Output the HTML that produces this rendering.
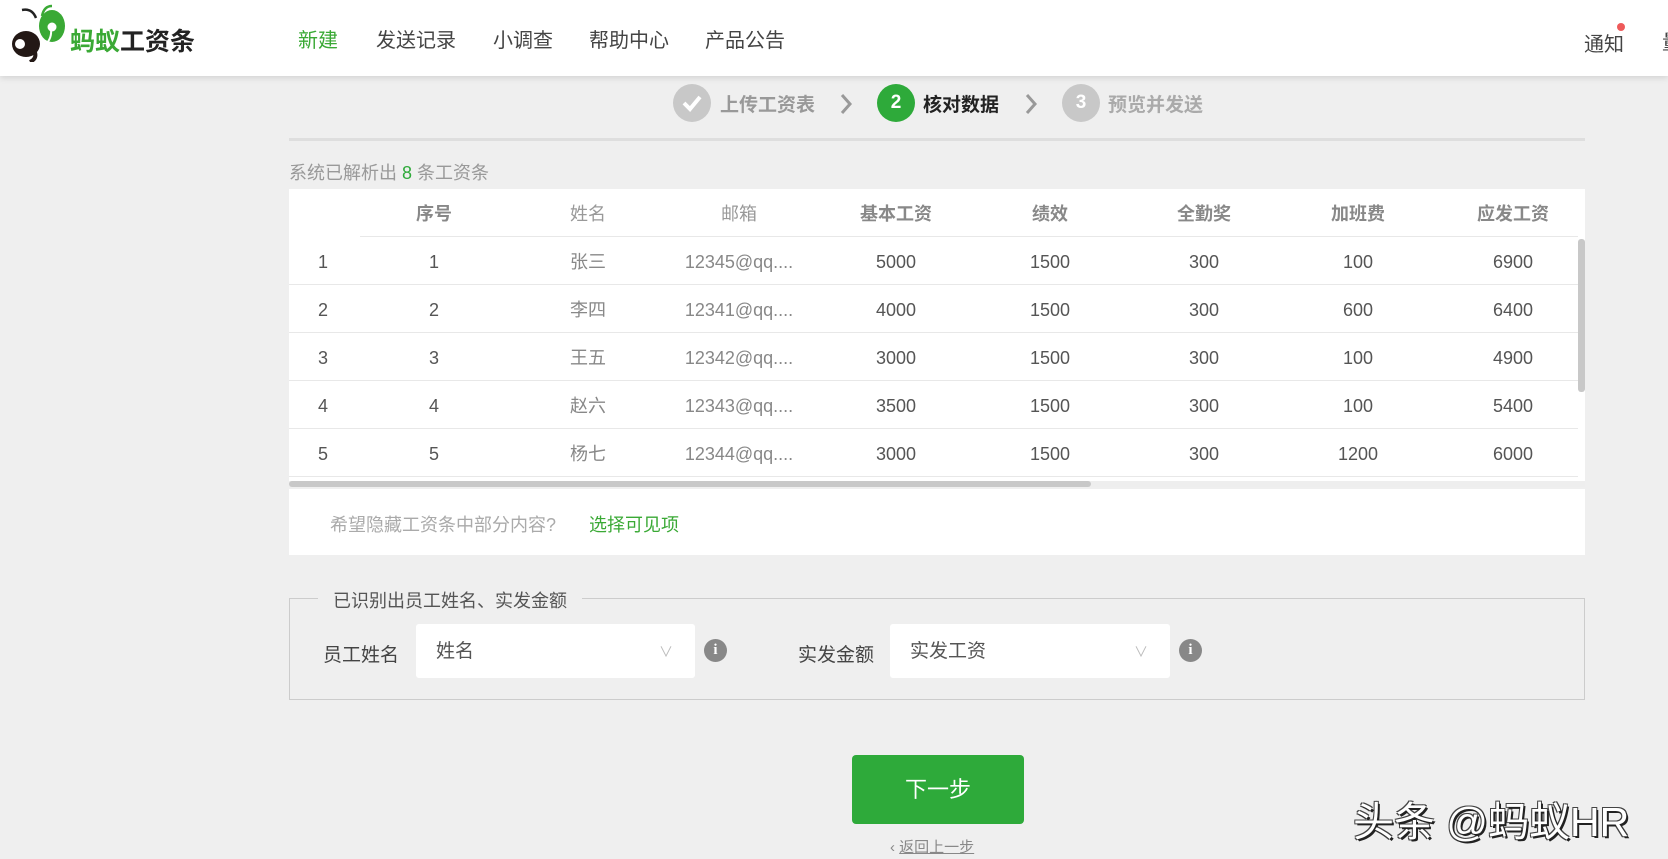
<!DOCTYPE html>
<html><head><meta charset="utf-8"><style>
*{margin:0;padding:0;box-sizing:border-box}
body{width:1668px;height:859px;overflow:hidden;background:#efefef;font-family:"Liberation Sans","Noto Sans CJK SC",sans-serif;position:relative;color:#555}
.abs{position:absolute;white-space:nowrap}
.hdr{position:absolute;left:0;top:0;width:1668px;height:76px;background:#fff;box-shadow:0 2px 6px rgba(0,0,0,.12)}
.nav{font-size:20px;color:#444;top:24px}
.circ{position:absolute;width:38px;height:38px;border-radius:50%;top:84px;color:#fff;font-weight:bold;font-size:19px;text-align:center;line-height:38px}
.st{top:90px;font-size:19px;font-weight:bold}
.tbl{position:absolute;left:289px;top:189px;width:1296px;height:298px;background:#fff;overflow:hidden}
.row{position:absolute;left:0;width:1289px;height:48px;border-bottom:1px solid #e8e8e8}
.c{position:absolute;top:0;line-height:50px;font-size:18px;text-align:center;width:140px;margin-left:-70px}
.h .c{font-weight:bold;color:#888}
.sel{position:absolute;top:624px;height:54px;background:#fff;border-radius:3px;font-size:19px;color:#555;line-height:56px;padding-left:20px}
.info{position:absolute;top:639px;width:23px;height:23px;border-radius:50%;background:#888;color:#fff;font-size:15px;font-weight:bold;text-align:center;line-height:23px;font-family:"Liberation Serif",serif}
</style></head><body>
<div class="hdr"></div>
<svg class="abs" style="left:6px;top:4px" width="62" height="58" viewBox="0 0 62 58">
<path d="M30 14 Q26 4 16 6" stroke="#222" stroke-width="2.5" fill="none"/>
<path d="M36 12 Q38 2 46 2" stroke="#3aa935" stroke-width="2.5" fill="none"/>
<ellipse cx="20" cy="40" rx="14" ry="13" fill="#231815"/>
<circle cx="14" cy="40" r="5" fill="#fff"/>
<path d="M28 46 Q32 54 24 58" stroke="#231815" stroke-width="4" fill="none"/>
<ellipse cx="46" cy="22" rx="13" ry="16" fill="#3aa935"/>
<circle cx="46" cy="23" r="4.5" fill="#fff"/>
<path d="M45 25 Q46 34 40 40" stroke="#fff" stroke-width="2" fill="none"/>
</svg>
<div class="abs" style="left:70px;top:22px;font-size:25px;font-weight:bold"><span style="color:#3aa935">蚂蚁</span><span style="color:#222">工资条</span></div>
<div class="abs nav" style="left:298px;color:#3aa935">新建</div>
<div class="abs nav" style="left:376px">发送记录</div>
<div class="abs nav" style="left:493px">小调查</div>
<div class="abs nav" style="left:589px">帮助中心</div>
<div class="abs nav" style="left:705px">产品公告</div>
<div class="abs nav" style="left:1584px;top:28px">通知</div>
<div class="abs" style="left:1617px;top:23px;width:8px;height:8px;border-radius:50%;background:#ee5a5a"></div>
<div class="abs nav" style="left:1662px;top:26px">量</div>

<div class="circ" style="left:673px;background:#c8c8c8"><svg width="38" height="38"><path d="M11 19 L17 25 L27 13" stroke="#fff" stroke-width="4" fill="none"/></svg></div>
<div class="abs st" style="left:720px;color:#999">上传工资表</div>
<svg class="abs" style="left:839px;top:93px" width="14" height="22"><path d="M3 2 L11 11 L3 20" stroke="#999" stroke-width="3" fill="none"/></svg>
<div class="circ" style="left:877px;background:#2eaa3a">2</div>
<div class="abs st" style="left:923px;color:#222">核对数据</div>
<svg class="abs" style="left:1024px;top:93px" width="14" height="22"><path d="M3 2 L11 11 L3 20" stroke="#999" stroke-width="3" fill="none"/></svg>
<div class="circ" style="left:1062px;background:#c8c8c8">3</div>
<div class="abs st" style="left:1108px;color:#aaa">预览并发送</div>
<div class="abs" style="left:289px;top:138px;width:1296px;height:3px;background:#dedede"></div>
<div class="abs" style="left:289px;top:159px;font-size:18px;color:#999">系统已解析出 <span style="color:#2eaa3a">8</span> 条工资条</div>

<div class="tbl">
<div class="row h" style="top:0;border-bottom:none"><div class="abs" style="left:71px;top:47px;width:1218px;height:1px;background:#e8e8e8"></div>
<div class="c" style="left:145px">序号</div><div class="c" style="left:299px;font-weight:normal;color:#999">姓名</div><div class="c" style="left:450px;font-weight:normal;color:#999">邮箱</div><div class="c" style="left:607px">基本工资</div><div class="c" style="left:761px">绩效</div><div class="c" style="left:915px">全勤奖</div><div class="c" style="left:1069px">加班费</div><div class="c" style="left:1224px">应发工资</div></div>
<div class="row" style="top:48px"><div class="c" style="left:34px">1</div><div class="c" style="left:145px">1</div><div class="c" style="left:299px;color:#888">张三</div><div class="c" style="left:450px;color:#888">12345@qq....</div><div class="c" style="left:607px">5000</div><div class="c" style="left:761px">1500</div><div class="c" style="left:915px">300</div><div class="c" style="left:1069px">100</div><div class="c" style="left:1224px">6900</div></div>
<div class="row" style="top:96px"><div class="c" style="left:34px">2</div><div class="c" style="left:145px">2</div><div class="c" style="left:299px;color:#888">李四</div><div class="c" style="left:450px;color:#888">12341@qq....</div><div class="c" style="left:607px">4000</div><div class="c" style="left:761px">1500</div><div class="c" style="left:915px">300</div><div class="c" style="left:1069px">600</div><div class="c" style="left:1224px">6400</div></div>
<div class="row" style="top:144px"><div class="c" style="left:34px">3</div><div class="c" style="left:145px">3</div><div class="c" style="left:299px;color:#888">王五</div><div class="c" style="left:450px;color:#888">12342@qq....</div><div class="c" style="left:607px">3000</div><div class="c" style="left:761px">1500</div><div class="c" style="left:915px">300</div><div class="c" style="left:1069px">100</div><div class="c" style="left:1224px">4900</div></div>
<div class="row" style="top:192px"><div class="c" style="left:34px">4</div><div class="c" style="left:145px">4</div><div class="c" style="left:299px;color:#888">赵六</div><div class="c" style="left:450px;color:#888">12343@qq....</div><div class="c" style="left:607px">3500</div><div class="c" style="left:761px">1500</div><div class="c" style="left:915px">300</div><div class="c" style="left:1069px">100</div><div class="c" style="left:1224px">5400</div></div>
<div class="row" style="top:240px"><div class="c" style="left:34px">5</div><div class="c" style="left:145px">5</div><div class="c" style="left:299px;color:#888">杨七</div><div class="c" style="left:450px;color:#888">12344@qq....</div><div class="c" style="left:607px">3000</div><div class="c" style="left:761px">1500</div><div class="c" style="left:915px">300</div><div class="c" style="left:1069px">1200</div><div class="c" style="left:1224px">6000</div></div>
<div class="abs" style="left:1289px;top:50px;width:7px;height:153px;background:#c8c8c8;border-radius:3px"></div>
<div class="abs" style="left:0;top:292px;width:1296px;height:6px;background:#eee"></div>
<div class="abs" style="left:0;top:292px;width:802px;height:6px;background:#c8c8c8;border-radius:3px"></div>
</div>

<div class="abs" style="left:289px;top:489px;width:1296px;height:66px;background:#fff"></div>
<div class="abs" style="left:330px;top:511px;font-size:18px;color:#aaa">希望隐藏工资条中部分内容?</div>
<div class="abs" style="left:589px;top:511px;font-size:18px;color:#3aa935">选择可见项</div>

<div class="abs" style="left:289px;top:598px;width:1296px;height:102px;border:1px solid #ccc"></div>
<div class="abs" style="left:318px;top:587px;padding:0 15px;background:#efefef;font-size:18px;color:#555">已识别出员工姓名、实发金额</div>
<div class="abs" style="left:323px;top:640px;font-size:19px;color:#444">员工姓名</div>
<div class="sel" style="left:416px;width:279px">姓名<span style="position:absolute;right:22px;color:#bbb;font-size:14px">∨</span></div>
<div class="info" style="left:704px">i</div>
<div class="abs" style="left:798px;top:640px;font-size:19px;color:#444">实发金额</div>
<div class="sel" style="left:890px;width:280px">实发工资<span style="position:absolute;right:22px;color:#bbb;font-size:14px">∨</span></div>
<div class="info" style="left:1179px">i</div>

<div class="abs" style="left:852px;top:755px;width:172px;height:69px;background:#2eaa3a;border-radius:4px;color:#fff;font-size:22px;text-align:center;line-height:69px">下一步</div>
<div class="abs" style="left:890px;top:836px;font-size:15px;color:#888">‹ <span style="text-decoration:underline">返回上一步</span></div>
<div class="abs" style="left:1353px;top:788px;font-size:41px;color:#fff;text-shadow:2px 2px 0 #222,-1px -1px 0 #444,1px -1px 0 #444,-1px 1px 0 #444">头条 @蚂蚁HR</div>
</body></html>
